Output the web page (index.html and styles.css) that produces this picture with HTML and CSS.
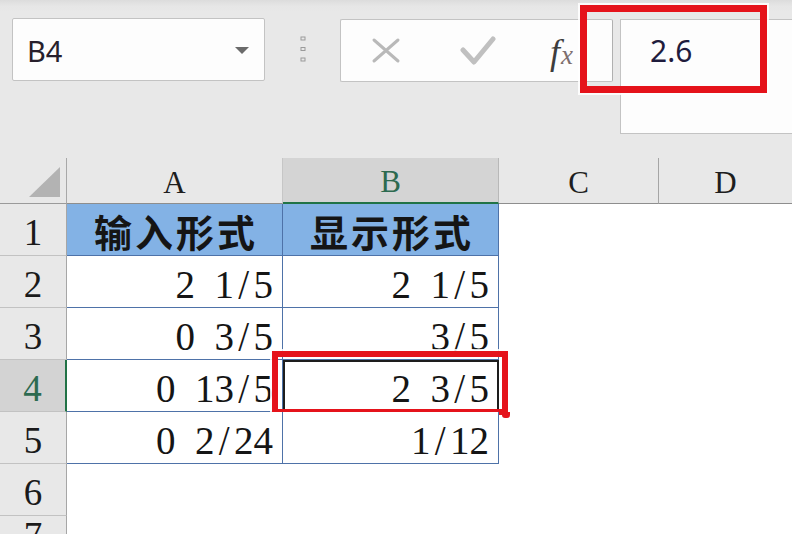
FILE: index.html
```html
<!DOCTYPE html>
<html lang="zh">
<head>
<meta charset="utf-8">
<title>Sheet</title>
<link rel="stylesheet" href="styles.css">
</head>
<body>
<div class="app">
  <div class="toolbar">
    <div class="namebox"><span class="nb-text">B4</span><span class="caret"></span></div>
    <div class="grip">
      <svg width="8" height="26" viewBox="0 0 8 26"><rect x="2" y="1" width="4" height="3" fill="none" stroke="#9a9a9a" stroke-width="1"/><rect x="2" y="11.5" width="4" height="3" fill="none" stroke="#9a9a9a" stroke-width="1"/><rect x="2" y="22" width="4" height="3" fill="none" stroke="#9a9a9a" stroke-width="1"/></svg>
    </div>
    <div class="fxbox">
      <svg class="ico-x" width="30" height="27" viewBox="0 0 30 27"><path d="M3 3 L27 24 M27 3 L3 24" stroke="#b9b9b9" stroke-width="3" stroke-linecap="round" fill="none"/></svg>
      <svg class="ico-check" width="36" height="30" viewBox="0 0 36 30"><path d="M3 14 L14 26 L33 3" stroke="#c0c0c0" stroke-width="5" stroke-linecap="round" stroke-linejoin="round" fill="none"/></svg>
      <span class="fx"><span class="fx-f">f</span><span class="fx-x">x</span></span>
    </div>
    <div class="formula">2.6</div>
    <div class="hl hl-formula"></div>
  </div>

  <div class="sheet">
    <div class="corner"><div class="tri"></div></div>
    <div class="colh">A</div>
    <div class="colh sel">B</div>
    <div class="colh">C</div>
    <div class="colh last">D</div>

    <div class="rowh">1</div>
    <div class="t head">输入形式</div>
    <div class="t head">显示形式</div>
    <div class="c"></div>
    <div class="c"></div>

    <div class="rowh">2</div>
    <div class="t num">2&ensp;1<span class="sl">/</span>5</div>
    <div class="t num">2&ensp;1<span class="sl">/</span>5</div>
    <div class="c"></div>
    <div class="c"></div>

    <div class="rowh">3</div>
    <div class="t num">0&ensp;3<span class="sl">/</span>5</div>
    <div class="t num">3<span class="sl">/</span>5</div>
    <div class="c"></div>
    <div class="c"></div>

    <div class="rowh sel">4</div>
    <div class="t num">0&ensp;13<span class="sl">/</span>5</div>
    <div class="t num active">2&ensp;3<span class="sl">/</span>5<div class="hl hl-cell"></div></div>
    <div class="c"></div>
    <div class="c"></div>

    <div class="rowh">5</div>
    <div class="t num">0&ensp;2<span class="sl">/</span>24</div>
    <div class="t num">1<span class="sl">/</span>12</div>
    <div class="c"></div>
    <div class="c"></div>

    <div class="rowh">6</div>
    <div class="c"></div>
    <div class="c"></div>
    <div class="c"></div>
    <div class="c"></div>

    <div class="rowh r7">7</div>
    <div class="c"></div>
    <div class="c"></div>
    <div class="c"></div>
    <div class="c"></div>
  </div>
</div>
</body>
</html>
```

FILE: styles.css
```css
html, body {
  margin: 0;
  padding: 0;
}
body {
  width: 792px;
  height: 534px;
  overflow: hidden;
  background: #e8e8e8;
}
.app {
  width: 792px;
  height: 534px;
  overflow: hidden;
}
.toolbar {
  position: relative;
  box-sizing: border-box;
  height: 158px;
  padding: 18px 0 0 12px;
  display: flex;
  align-items: flex-start;
  background: linear-gradient(#dcdcdc 0, #e6e6e6 6px, #e8e8e8 12px);
}
.toolbar > * {
  flex-shrink: 0;
}
.namebox {
  box-sizing: border-box;
  width: 253px;
  height: 63px;
  border: 1px solid #c3c3c3;
  border-radius: 2px;
  background: #fdfdfd;
  display: flex;
  align-items: center;
  justify-content: space-between;
  padding: 0 15px 0 14px;
}
.nb-text {
  font-family: "Noto Sans", sans-serif;
  font-size: 29px;
  color: #271f2c;
  line-height: 1;
  padding-top: 1px;
}
.caret {
  width: 0;
  height: 0;
  border-left: 7px solid transparent;
  border-right: 7px solid transparent;
  border-top: 7px solid #6b6b6b;
  margin-top: 1px;
}
.grip {
  width: 75px;
  display: flex;
  justify-content: center;
  padding-top: 18px;
}
.fxbox {
  box-sizing: border-box;
  width: 273px;
  height: 63px;
  margin-top: 1px;
  border: 1px solid #c3c3c3;
  border-right-color: #b0b0b0;
  border-radius: 2px;
  background: #fdfdfd;
  display: flex;
  align-items: center;
  padding-left: 30px;
}
.ico-check {
  margin-left: 59px;
  margin-top: 1px;
}
.fx {
  margin-left: 54px;
  font-family: "Liberation Serif", serif;
  font-style: italic;
  font-size: 36px;
  line-height: 1;
  margin-top: 2px;
}
.fx-f {
  color: #3d3d3d;
}
.fx-x {
  color: #7d6e6e;
  font-size: 27px;
  margin-left: 1px;
}
.formula {
  box-sizing: border-box;
  width: 200px;
  height: 115px;
  margin-left: 7px;
  margin-top: 1px;
  border: 1px solid #c3c3c3;
  background: #fdfdfd;
  padding: 11px 0 0 29px;
  font-family: "Noto Sans", sans-serif;
  font-size: 30px;
  line-height: 40px;
  color: #1f1c3d;
}
.hl {
  position: absolute;
  box-sizing: border-box;
  border: 7px solid #e5131b;
  box-shadow: 0 0 0 2px rgba(255, 255, 255, 0.85);
}
.hl-formula {
  left: 580px;
  top: 5px;
  width: 187px;
  height: 88px;
}

.sheet {
  display: grid;
  grid-template-columns: 67px 216px 216px 160px 133px;
  grid-template-rows: 46px repeat(6, 52px) 40px;
  background: #ffffff;
}
.corner {
  box-sizing: border-box;
  background: #e8e8e8;
  border-right: 1px solid #a8a8a8;
  border-bottom: 1px solid #9a9a9a;
  display: flex;
  justify-content: flex-end;
  align-items: flex-end;
  padding: 0 6px 6px 0;
}
.tri {
  width: 31px;
  height: 30px;
  background: #b3b3b3;
  clip-path: polygon(100% 0, 100% 100%, 0 100%);
}
.colh {
  box-sizing: border-box;
  background: #e8e8e8;
  border-right: 1px solid #c6c6c6;
  border-bottom: 1px solid #8e8e8e;
  display: flex;
  align-items: center;
  justify-content: center;
  font-family: "Liberation Serif", serif;
  font-size: 31px;
  color: #1e1e1e;
  padding-top: 4px;
}
.colh:nth-child(4) {
  border-right-color: #a5a5a5;
}
.colh.sel {
  background: #d4d4d4;
  border-bottom: 2px solid #217346;
  border-right-color: #b8b8b8;
  color: #2d6a50;
}
.colh.last {
  border-right: 0;
}
.rowh {
  box-sizing: border-box;
  background: #e8e8e8;
  border-right: 1px solid #a6a6a6;
  border-bottom: 1px solid #c2c2c2;
  display: flex;
  align-items: center;
  justify-content: center;
  font-family: "Liberation Serif", serif;
  font-size: 37px;
  color: #1a1a1a;
  padding-top: 6px;
}
.rowh.r7 {
  align-items: flex-start;
  padding-top: 0;
  border-bottom: 0;
  line-height: 1.1;
}
.rowh.sel {
  background: #d3d3d3;
  border-right: 2px solid #217346;
  color: #2d6a50;
}
.c {
  background: #ffffff;
}
.t {
  box-sizing: border-box;
  position: relative;
  background: #ffffff;
  border-right: 1px solid #4e72a8;
  border-bottom: 1px solid #4e72a8;
  display: flex;
  align-items: center;
  color: #151515;
}
.t.head {
  background: #83b2e5;
  justify-content: center;
  font-family: "Noto Sans CJK SC", sans-serif;
  font-weight: 700;
  font-size: 38px;
  letter-spacing: 3px;
  padding-left: 3px;
  padding-top: 2px;
}
.t.num {
  justify-content: flex-end;
  padding: 6px 9px 0 0;
  font-family: "Liberation Serif", serif;
  font-size: 39px;
  white-space: pre;
}
.sl {
  display: inline-block;
  width: 0.5em;
  text-align: center;
  transform: scaleY(1.08);
}
.t.active {
  outline: 2px solid #1d1d1d;
  outline-offset: -2px;
}
.hl-cell {
  left: -11px;
  top: -9px;
  width: 236px;
  height: 64px;
  border-width: 6px;
}
.hl-cell::after {
  content: "";
  position: absolute;
  right: -8px;
  bottom: -9px;
  width: 8px;
  height: 6px;
  background: #e5131b;
  border-radius: 0 0 3px 3px;
}
```
